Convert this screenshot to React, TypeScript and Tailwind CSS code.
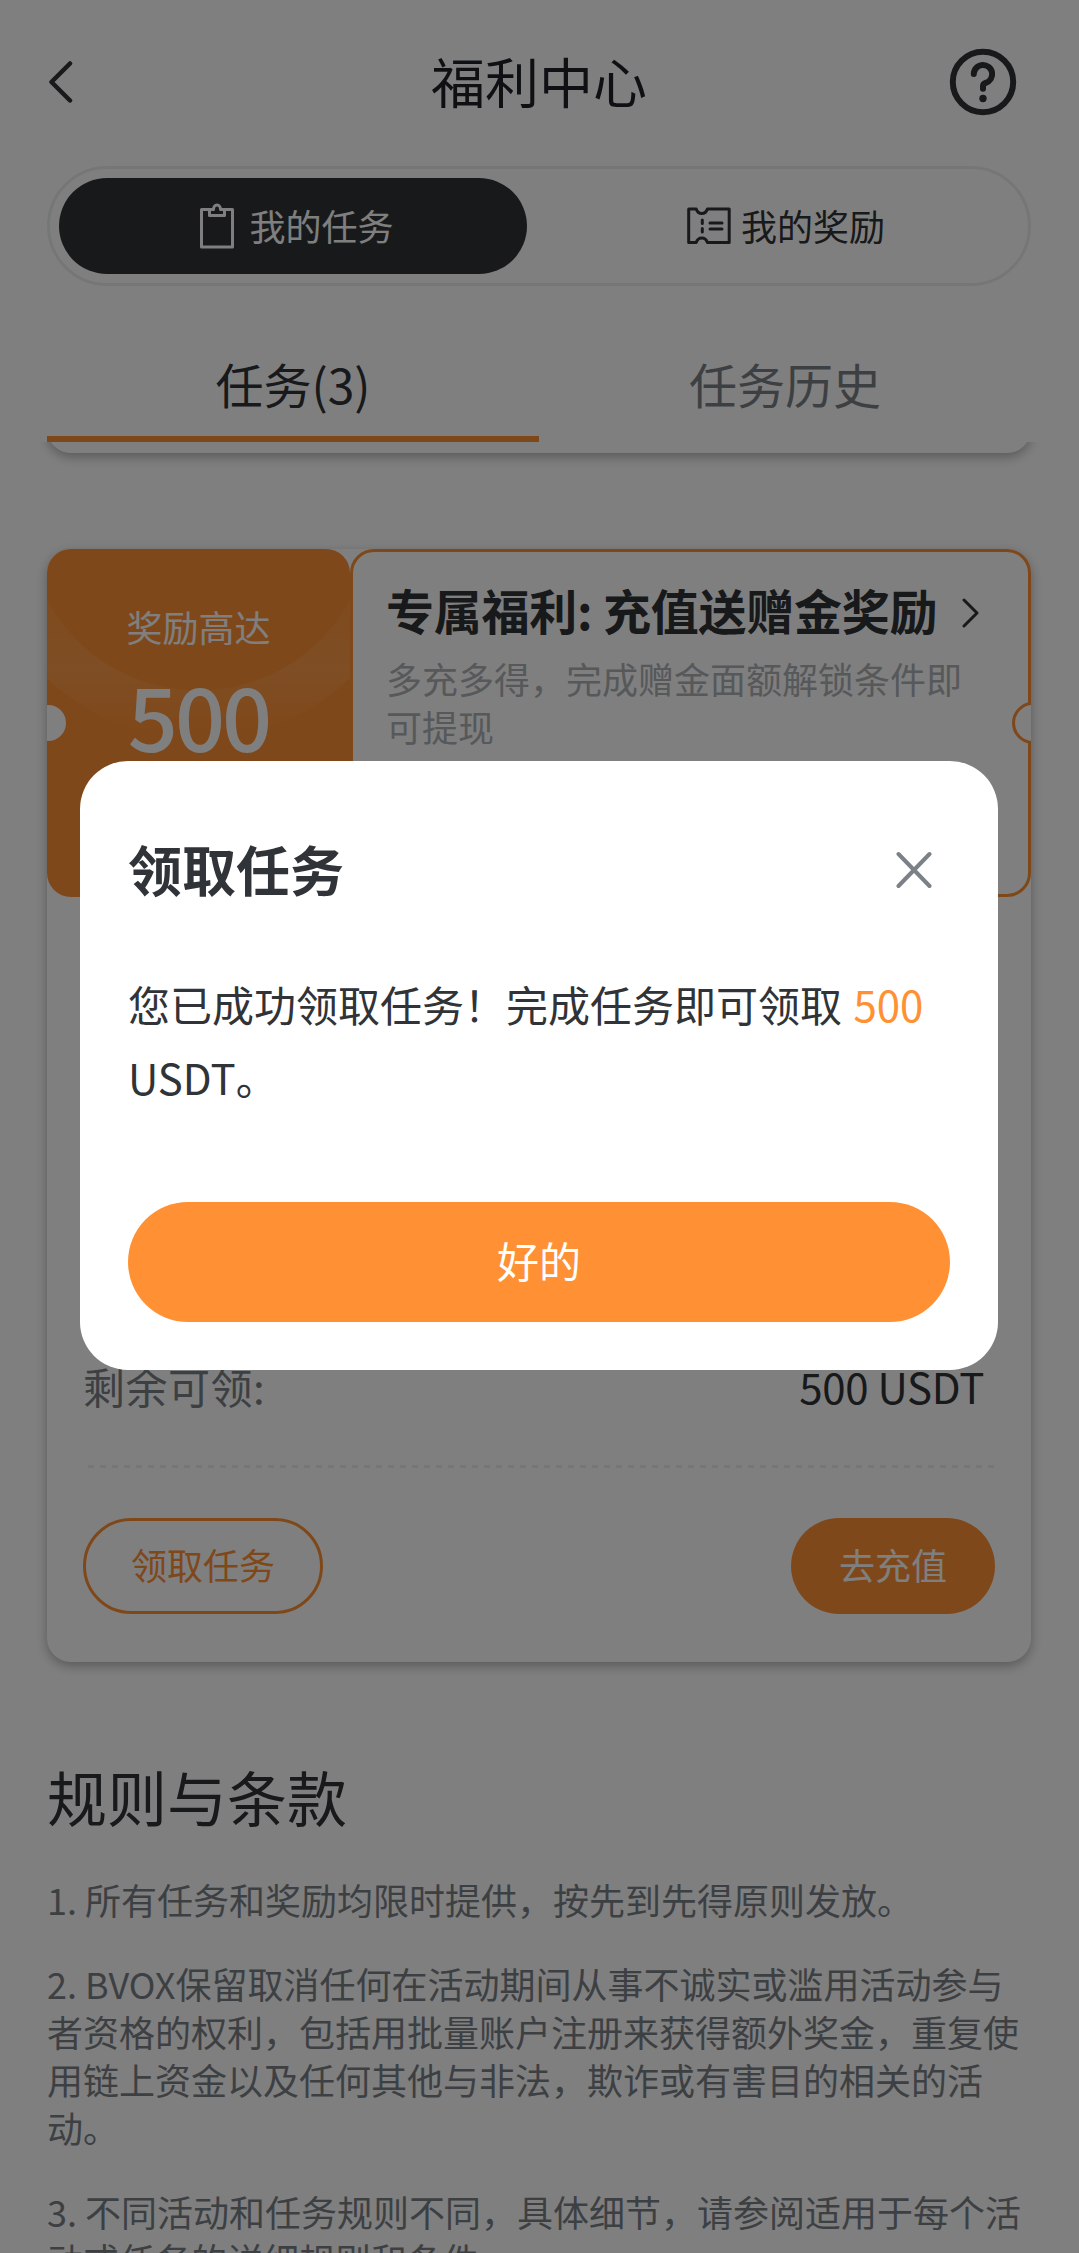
import { useState } from "react";

const rules = [
  ["1. 所有任务和奖励均限时提供，按先到先得原则发放。"],
  [
    "2. BVOX保留取消任何在活动期间从事不诚实或滥用活动参与",
    "者资格的权利，包括用批量账户注册来获得额外奖金，重复使",
    "用链上资金以及任何其他与非法，欺诈或有害目的相关的活",
    "动。",
  ],
  [
    "3. 不同活动和任务规则不同，具体细节，请参阅适用于每个活",
    "动或任务的详细规则和条件。",
  ],
];

function BackIcon() {
  return (
    <svg width="26" height="44" viewBox="0 0 26 44" fill="none">
      <path d="M23 3.500 4.500 22 23 40.500" stroke="#303337" strokeWidth="4.5" strokeLinecap="round" strokeLinejoin="round" />
    </svg>
  );
}

function HelpIcon() {
  return (
    <svg width="68" height="68" viewBox="0 0 68 68" fill="none" stroke="#303337" strokeWidth="6" strokeLinecap="round" strokeLinejoin="round">
      <circle cx="34" cy="34" r="30.200" />
      <path d="M24.800 26a9.200 9.200 0 1 1 11.700 9c-1.700.500-2.500 1.500-2.500 3.200v2.500" />
      <circle cx="34" cy="50.500" r="3.700" fill="#303337" stroke="none" />
    </svg>
  );
}

function TaskIcon() {
  return (
    <svg width="34" height="46" viewBox="0 0 34 46" fill="none" stroke="white" strokeWidth="3" strokeLinejoin="round">
      <path d="M10 6.500H1.500v37.500h31V6.500H24" />
      <path d="M9.500 6.500v6h15v-6h-4c0-2.500-1.300-4.500-3.500-4.500s-3.500 2-3.500 4.500z" />
    </svg>
  );
}

function TicketIcon() {
  return (
    <svg width="44" height="38" viewBox="0 0 44 38" fill="none" stroke="#303337" strokeWidth="3" strokeLinejoin="round">
      <path d="M1.700 2h7.500c1 3 3 4.500 5.600 4.500s4.600-1.500 5.600-4.500h21.800v33.500H20.400c-1-3-3-4.500-5.600-4.500s-4.600 1.500-5.600 4.500H1.700z" />
      <path d="M15.300 13v3.500M15.300 21.500v3.500M23 16h12M23 22h12" strokeLinecap="round" />
    </svg>
  );
}

export default function App() {
  const [open, setOpen] = useState(true);

  return (
    <div className="relative flex h-[2253px] w-[1079px] flex-col overflow-hidden bg-white pr-12 pl-[47px] font-['Noto_Sans_CJK_SC',sans-serif] text-[#303337]">
      {/* Header */}
      <header className="flex h-[166px] shrink-0 items-center justify-between pr-[14px] pb-[2px]">
        <button className="w-[68px]">
          <BackIcon />
        </button>
        <h1 className="pb-[2px] pl-[14px] text-[54px] leading-[80px] text-[#1c2129]">福利中心</h1>
        <HelpIcon />
      </header>

      {/* Segmented switch */}
      <div className="flex h-[120px] shrink-0 rounded-full border-3 border-[#ebeeee] p-[9px]">
        <button className="flex w-[468px] items-center justify-center gap-[15px] rounded-full bg-[#303337] pl-2 text-[36px] text-white">
          <TaskIcon />
          <span className="pb-[3px]">我的任务</span>
        </button>
        <button className="flex flex-1 items-center justify-center gap-[10px] pl-[26px] text-[36px]">
          <TicketIcon />
          <span className="pb-[3px]">我的奖励</span>
        </button>
      </div>

      {/* Tabs */}
      <div className="grid h-[156px] shrink-0 grid-cols-2 text-[48px]">
        <button className="flex items-center justify-center border-b-6 border-[#ff9134] pt-11">任务(3)</button>
        <button className="flex items-center justify-center pt-[38px] text-[#7b8187]">任务历史</button>
      </div>

      {/* Tail of the previous card, scrolled under the tabs */}
      <div className="-mx-6 h-[36px] shrink-0 overflow-hidden px-6">
        <div className="-mt-[49px] h-[60px] rounded-b-[24px] bg-white shadow-[0_4px_12px_rgba(0,0,0,0.3)]" />
      </div>

      {/* Task card */}
      <section className="mt-[71px] flex h-[1113px] shrink-0 flex-col rounded-[24px] bg-white shadow-[0_4px_12px_rgba(0,0,0,0.3)]">
        <div className="flex h-[348px] shrink-0">
          <div className="relative flex w-[303px] flex-col items-center overflow-hidden rounded-[24px] bg-[#ff9134] pt-[50px] text-white">
            <svg className="absolute inset-0" width="303" height="348" viewBox="0 0 303 348">
              <defs>
                <linearGradient id="glow" x1="0" y1="0" x2="0" y2="1">
                  <stop offset="0" stopColor="#fff" stopOpacity="0.05" />
                  <stop offset="0.5" stopColor="#fff" stopOpacity="0.1" />
                  <stop offset="0.95" stopColor="#fff" stopOpacity="0" />
                </linearGradient>
              </defs>
              <path d="M0 51A172 172 0 0 0 303 51V129A219 219 0 0 1 0 129Z" fill="url(#glow)" />
            </svg>
            <div className="relative text-[36px] leading-[54px]">奖励高达</div>
            <div className="relative mt-[6px] text-[88px] leading-[110px] font-medium tracking-[-3px]">500</div>
            <span className="absolute top-[156px] -left-[17px] size-9 rounded-full bg-white" />
          </div>
          <div className="relative flex-1 rounded-[24px] border-3 border-[#ff9134] pt-[21px] pl-[33px]">
            <div className="flex items-center gap-[25px]">
              <h2 className="text-[48px] leading-[72px] font-bold tracking-[-0.25px] whitespace-nowrap">专属福利: 充值送赠金奖励</h2>
              <svg className="mt-2" width="18" height="30" viewBox="0 0 18 30" fill="none">
                <path d="m2 2 13 13L2 28" stroke="#303337" strokeWidth="3" strokeLinecap="round" strokeLinejoin="round" />
              </svg>
            </div>
            <p className="mt-[9px] text-[36px] leading-[48px] text-[#adb1b5]">
              多充多得，完成赠金面额解锁条件即
              <br />
              可提现
            </p>
            {/* Ticket notch */}
            <svg className="absolute top-[150px] -right-[3px]" width="19" height="42" viewBox="0 0 19 42">
              <circle cx="21" cy="21" r="19.500" fill="#fff" stroke="#ff9134" strokeWidth="3" />
            </svg>
          </div>
        </div>

        <div className="mt-auto flex items-center justify-between pr-[47px] pl-[36px] text-[42px] leading-[60px]">
          <span className="tracking-[0.5px] text-[#7b8187]">剩余可领:</span>
          <span className="tracking-[-0.3px]">500 USDT</span>
        </div>
        <svg className="mt-[49px] ml-[41px] shrink-0" width="910" height="3">
          <path d="M0 1.500H907" stroke="#ebeeee" strokeWidth="3" strokeDasharray="6 6" />
        </svg>
        <div className="mt-[50px] mb-12 flex h-24 shrink-0 justify-between pr-9 pl-9 text-[36px]">
          <button className="w-60 rounded-full border-3 border-[#ff9134] pb-[4px] text-[#ff9134]">领取任务</button>
          <button className="w-[204px] rounded-full bg-[#ff9134] pb-[4px] text-white">去充值</button>
        </div>
      </section>

      {/* Rules */}
      <section className="mt-[89px] shrink-0">
        <h2 className="text-[60px] leading-[90px]">规则与条款</h2>
        <ol className="mt-[34px] flex flex-col gap-9 text-[36px] leading-[48px] text-[#7b8187]">
          {rules.map((lines) => (
            <li key={lines[0]}>
              {lines.map((line) => (
                <span key={line} className="block whitespace-nowrap">{line}</span>
              ))}
            </li>
          ))}
        </ol>
      </section>

      {open && (
        <div className="absolute inset-0 flex items-start justify-center bg-black/50 pt-[761px] pr-px">
          <div className="flex h-[609px] w-[918px] flex-col rounded-[48px] bg-white p-12">
            <div className="mt-[20px] flex items-center justify-between pr-[18px]">
              <h2 className="pb-[2px] text-[54px] leading-[80px] font-bold">领取任务</h2>
              <button onClick={() => setOpen(false)}>
                <svg width="36" height="38" viewBox="0 0 36 38" fill="none">
                  <path d="m2.500 3 31 32M33.500 3l-31 32" stroke="#7b8187" strokeWidth="4" strokeLinecap="round" />
                </svg>
              </button>
            </div>
            <p className="mt-[56px] text-[42px] leading-[73px] whitespace-nowrap">
              您已成功领取任务！完成任务即可领取 <span className="ml-[2px] text-[#ff9134]">500</span>
              <br />
              USDT。
            </p>
            <button onClick={() => setOpen(false)} className="mt-auto h-[120px] shrink-0 rounded-full bg-[#ff9134] pb-[5px] text-[42px] text-white">
              好的
            </button>
          </div>
        </div>
      )}
    </div>
  );
}
